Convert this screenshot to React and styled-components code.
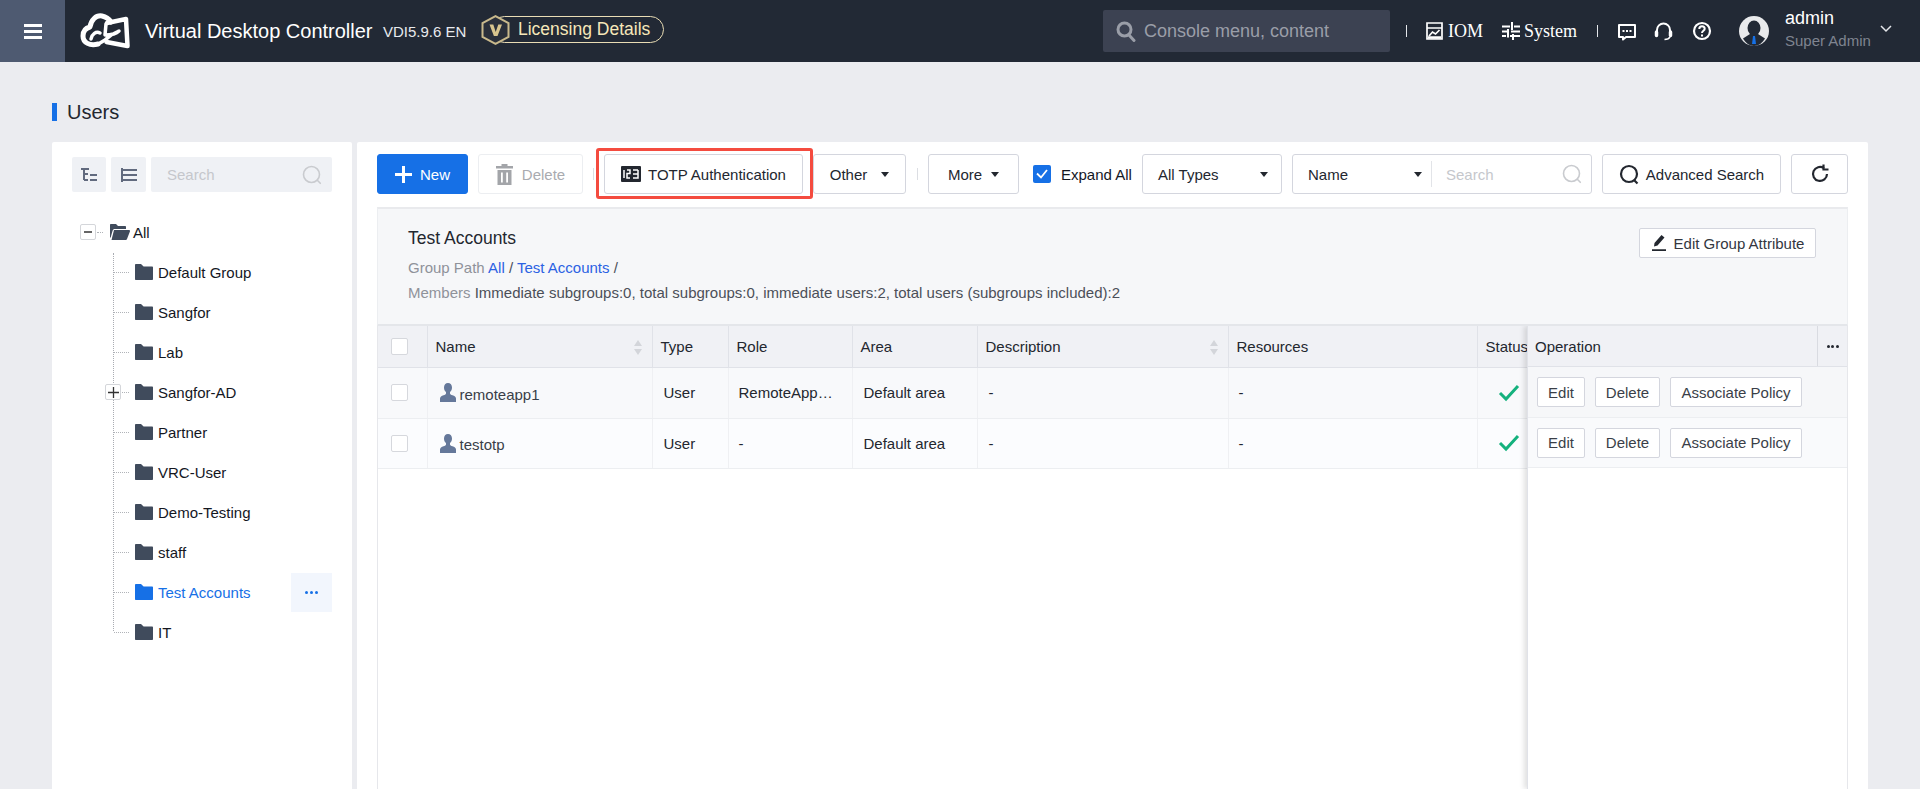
import React from "react";
import styled, { createGlobalStyle } from "styled-components";

const Global = createGlobalStyle`
  html, body { margin: 0; padding: 0; height: 789px; overflow: hidden; background: #ebecf0; }
  body { font-family: "Liberation Sans", Arial, sans-serif; font-size: 15px; color: #1f2430; }
  * { box-sizing: border-box; }
`;

const Page = styled.div`height: 789px; display: flex; flex-direction: column; overflow: hidden;`;

const Header = styled.header`
  height: 62px; flex: none; background: #222935; display: flex; align-items: center; color: #fff;
`;
const MenuBlock = styled.div`
  width: 65px; height: 62px; background: #4e5a71; display: flex; flex-direction: column;
  align-items: center; justify-content: center; gap: 3px; flex: none;
  i { display: block; width: 18px; height: 3px; background: #fff; }
`;
const Logo = styled.svg`width: 50px; height: 38px; margin-left: 15px; flex: none;`;
const AppTitle = styled.div`font-size: 20px; margin-left: 15px; white-space: nowrap; flex: none; width: 228px;`;
const Version = styled.div`font-size: 15px; margin-left: 10px; white-space: nowrap; color: #e8eaee; flex: none; width: 84px;`;
const License = styled.div`
  position: relative; margin-left: 24px; height: 27px; width: 173px; flex: none;
  border: 1px solid #e9dcb4; border-radius: 14px; color: #f6e7b9; font-size: 17.5px;
  display: flex; align-items: center; padding-left: 26px; white-space: nowrap; margin-top: -3px;
`;
const Hex = styled.svg`position: absolute; left: -11px; top: -2px; width: 29px; height: 30px;`;
const TopSearch = styled.div`
  width: 287px; height: 42px; background: #3c4252; border-radius: 2px; display: flex; align-items: center; flex: none;
  margin-left: 439px; padding-left: 13px; gap: 8px; color: #9a9ea8; font-size: 18px; white-space: nowrap;
`;
const TopSep = styled.span`width: 1px; height: 12px; background: #e4e6ea; flex: none; margin-left: ${p => p.$l}px;`;
const SerifLink = styled.div`
  font-family: "Liberation Serif", serif; font-size: 18px; display: flex; align-items: center; gap: ${p => p.$g}px;
  margin-left: 19px; width: ${p => p.$w}px; flex: none; color: #fff; white-space: nowrap;
`;
const TopIcon = styled.svg`width: ${p => p.$w || 20}px; height: 20px; flex: none; margin-left: ${p => p.$l || 0}px; display: block;`;
const Avatar = styled.svg`width: 30px; height: 30px; margin-left: 27px; flex: none;`;
const UserBox = styled.div`
  margin-left: 16px; width: 95px; height: 62px; flex: none; display: flex; flex-direction: column; padding-top: 8px; white-space: nowrap;
`;
const UserName = styled.div`font-size: 18px; line-height: 20px; color: #fff;`;
const UserRole = styled.div`font-size: 15px; line-height: 20px; margin-top: 3px; color: #7f8490;`;
const Chevron = styled.svg`width: 12px; height: 8px; flex: none; margin-top: -4px;`;

const Content = styled.main`flex: 1; padding: 0 52px; display: flex; flex-direction: column; min-height: 0;`;
const PageTitle = styled.h1`
  margin: 41px 0 21px; height: 18px; font-weight: 400; font-size: 20px; line-height: 18px; padding-left: 10px;
  border-left: 5px solid #1670e6; color: #23272f;
`;
const Panels = styled.div`flex: 1; display: flex; gap: 5px; min-height: 0;`;

const TreePanel = styled.aside`
  width: 300px; flex: none; background: #fff; border-radius: 2px 2px 0 0; padding: 15px 20px 0;
`;
const TreeTools = styled.div`display: flex; gap: 5px;`;
const ToolBtn = styled.div`
  width: ${p => p.$w}px; height: 35px; background: #eff1f5; border-radius: 2px; display: flex; align-items: center; justify-content: center; flex: none;
`;
const TreeSearch = styled.div`
  flex: 1; height: 35px; background: #eff1f5; border-radius: 2px; display: flex; align-items: center; justify-content: space-between;
  padding: 0 10px 0 16px; color: #c5c7cc; font-size: 15px;
`;
const Tree = styled.div`position: relative; margin-top: 20px;`;
const RootRow = styled.div`
  height: 40px; display: flex; align-items: center; padding-left: 8px; position: relative; color: #14171f;
`;
const Expander = styled.span`
  width: 16px; height: 16px; border: 1px solid #d4d6da; border-radius: 2px; display: flex; align-items: center; justify-content: center;
  background: #fff; flex: none; position: relative; z-index: 1;
`;
const Dots = styled.span`display: block; width: ${p => p.$w}px; margin-left: ${p => p.$l || 0}px; border-top: 1px dotted #b0b3b8; flex: none;`;
const OpenFolder = styled.svg`width: 20px; height: 16px; margin: 0 3px 0 7px; flex: none;`;
const VLine = styled.span`
  position: absolute; left: 41px; top: 41px; height: 378px; border-left: 1px dotted #a9acb2;
`;
const Node = styled.div`
  height: 40px; display: flex; align-items: center; position: relative; padding-left: 42px;
  color: ${p => (p.$active ? "#1670e6" : "#14171f")};
`;
const NodeExp = styled(Expander)`position: absolute; left: 33px; top: 12px;`;
const FolderIcon = styled.svg`width: 18px; height: 16px; flex: none; margin: 0 5px 0 6px;`;
const NodeMore = styled.div`
  margin-left: auto; width: 41px; height: 39px; background: #f2f6fd; display: flex; align-items: center; justify-content: center;
  gap: 2px; i { width: 3px; height: 3px; border-radius: 50%; background: #1670e6; display: block; }
`;

const MainPanel = styled.section`flex: 1; background: #fff; padding: 12px 20px 0 20px; border-radius: 2px 2px 0 0; display: flex; flex-direction: column; min-width: 0;`;
const Toolbar = styled.div`display: flex; align-items: center; height: 40px; flex: none; font-size: 15px;`;
const Btn = styled.button`
  height: 40px; width: ${p => p.$w}px; margin-left: ${p => p.$l || 0}px; flex: none; font: inherit; font-size: 15px; padding: 0;
  background: ${p => (p.$primary ? "#1670e6" : "#fff")};
  color: ${p => (p.$primary ? "#fff" : p.$muted ? "#a9abb0" : "#23272f")};
  border: 1px solid ${p => (p.$primary ? "#1670e6" : p.$muted ? "#eceef1" : "#d4d6de")};
  border-radius: 3px; display: flex; align-items: center; justify-content: center; gap: ${p => p.$gap ?? 6}px; white-space: nowrap;
`;
const Highlight = styled.div`
  position: relative; margin-left: 10px; flex: none;
  &::after { content: ""; position: absolute; inset: -6px -10px -5px -8px; border: 3px solid #f44b3f; border-radius: 3px; pointer-events: none; }
`;
const ToolSep = styled.span`width: 1px; height: 12px; background: #dcdee3; flex: none; margin-left: ${p => p.$l}px;`;
const Caret = styled.span`
  width: 0; height: 0; border-left: 4.5px solid transparent; border-right: 4.5px solid transparent; border-top: 5px solid #23272f; flex: none;
`;
const CheckLabel = styled.label`display: flex; align-items: center; gap: 10px; margin-left: 14px; width: 99px; white-space: nowrap; flex: none; color: #14171f;`;
const CheckBlue = styled.span`
  width: 18px; height: 18px; background: #1670e6; border-radius: 2px; display: flex; align-items: center; justify-content: center; flex: none;
`;
const Select = styled.div`
  height: 40px; width: 140px; margin-left: 10px; border: 1px solid #d4d6de; border-radius: 3px; flex: none;
  display: flex; align-items: center; justify-content: space-between; padding: 0 13px 0 15px; color: #23272f;
`;
const NameSearch = styled.div`
  height: 40px; width: 300px; margin-left: 10px; border: 1px solid #d4d6de; border-radius: 3px; flex: none; display: flex; align-items: center;
`;
const NameSel = styled.div`
  width: 139px; height: 26px; border-right: 1px solid #e2e4e8; display: flex; align-items: center; justify-content: space-between; padding: 0 9px 0 15px; color: #23272f;
`;
const NameInput = styled.div`
  flex: 1; display: flex; align-items: center; justify-content: space-between; padding: 0 9px 0 14px; color: #c5c7cc;
`;

const InfoPanel = styled.div`
  margin-top: 13px; height: 119px; flex: none; background: #f6f7f9; border-top: 2px solid #e9eaed; padding: 19px 31px 0 30px; position: relative;
  border-left: 1px solid #eceef1; border-right: 1px solid #eceef1; border-bottom: 2px solid #e4e6ea;
  display: flex; justify-content: space-between;
`;
const InfoText = styled.div`display: flex; flex-direction: column;`;
const InfoTitle = styled.div`font-size: 17.5px; line-height: 20px; color: #23272f;`;
const InfoLine = styled.div`font-size: 15px; line-height: 20px; margin-top: ${p => p.$t}px; color: #4b4f58;`;
const Muted = styled.span`color: #8f929a;`;
const PathLink = styled.span`color: #2b62e3;`;
const EditAttr = styled.button`
  width: 177px; height: 30px; font: inherit; font-size: 15px; color: #33373f; background: #fff; border: 1px solid #d4d6de; border-radius: 2px;
  display: flex; align-items: center; justify-content: center; gap: 7px; padding: 0; flex: none; white-space: nowrap;
`;

const TableArea = styled.div`
  flex: 1; position: relative; border-left: 1px solid #e6e7eb; border-right: 1px solid #e6e7eb; min-height: 0; overflow: hidden;
`;
const Table = styled.table`border-collapse: collapse; table-layout: fixed; width: 1470px;`;
const Th = styled.th`
  width: ${p => p.$w}px; height: 41px; background: #f0f1f5; border-right: 1px solid #e0e2e8; border-bottom: 1px solid #e0e2e8; font-weight: 400;
  text-align: left; padding: 0 0 0 ${p => p.$p ?? 8}px; position: relative; color: #23272f; font-size: 15px; white-space: nowrap; overflow: hidden;
`;
const Td = styled.td`
  height: ${p => p.$h}px; border-right: 1px solid #eff0f3; border-bottom: 1px solid #eceef1; padding: 0 0 0 ${p => p.$p ?? 11}px; font-size: 15px; color: #23272f;
  background: ${p => p.$bg}; white-space: nowrap; overflow: hidden;
`;
const Box = styled.span`
  display: block; width: 17px; height: 17px; border: 1px solid #d6d8dd; background: #fff; border-radius: 2px; margin-left: 13px;
`;
const SortMark = styled.span`
  position: absolute; right: 10px; top: 14px; display: flex; flex-direction: column; gap: 3px;
  i { display: block; width: 0; height: 0; border-left: 4px solid transparent; border-right: 4px solid transparent; }
  i:first-child { border-bottom: 6px solid #d3d5da; }
  i:last-child { border-top: 6px solid #d3d5da; }
`;
const UserCell = styled.div`display: flex; align-items: center; gap: 4px; color: #3a3f48;`;
const UserText = styled.span`padding-top: 3px;`;
const OpColumn = styled.div`
  position: absolute; right: 0; top: 0; bottom: 0; width: 320px; background: #fff; box-shadow: -3px 0 5px rgba(0,0,0,.12); border-left: 1px solid #e0e2e8;
`;
const OpHead = styled.div`
  height: 41px; background: #f0f1f5; display: flex; align-items: center; justify-content: space-between; border-bottom: 1px solid #e0e2e8; padding-left: 7px; color: #23272f;
`;
const OpMore = styled.div`
  width: 30px; height: 40px; border-left: 1px solid #d9dbe1; display: flex; align-items: center; justify-content: center; gap: 1.5px;
  i { width: 3px; height: 3px; border-radius: 50%; background: #23272f; display: block; }
`;
const OpRow = styled.div`
  height: ${p => p.$h}px; background: ${p => p.$bg}; border-bottom: 1px solid #eceef1; display: flex; align-items: center; padding-left: 9px; gap: 10px;
`;
const OpBtn = styled.button`
  height: 30px; width: ${p => p.$w}px; padding: 0; flex: none; font: inherit; font-size: 15px; color: #3a3f48; background: #fff; border: 1px solid #d4d6de; border-radius: 2px; white-space: nowrap;
`;

const Search = ({ size = 20, color = "#c9cbcf", width = 1.6 }) => (
  <svg width={size} height={size} viewBox="0 0 20 20" fill="none" stroke={color} strokeWidth={width}>
    <circle cx="9.5" cy="9.5" r="8" />
    <path d="M15.3 15.3l3 3" strokeLinecap="round" />
  </svg>
);
const Folder = ({ color = "#404b5c" }) => (
  <FolderIcon viewBox="0 0 18 16"><path fill={color} d="M0 1.200C0 .5.4 0 1 0h5l2.600 2.400H17c.6 0 1 .4 1 1V15c0 .6-.4 1-1 1H1c-.6 0-1-.4-1-1z" /></FolderIcon>
);
const Person = () => (
  <svg width="16" height="19" viewBox="0 0 16 19"><path fill="#65789a" d="M8 0c2.500 0 4 1.900 4 4.400 0 2-.8 3.600-2 4.600v1.400c0 .8 1 1.200 2.500 1.800C14.500 13 16 13.800 16 15.500V19H0v-3.500C0 13.800 1.500 13 3.500 12.200 5 11.600 6 11.200 6 10.400V9C4.800 8 4 6.400 4 4.400 4 1.900 5.500 0 8 0z" /></svg>
);
const GreenCheck = () => (
  <svg width="22" height="18" viewBox="0 0 22 18" fill="none" stroke="#14b17d" strokeWidth="3" style={{ display: "block" }}><path d="M2 9l6 6L20 2" /></svg>
);

const groups = ["Default Group", "Sangfor", "Lab", "Sangfor-AD", "Partner", "VRC-User", "Demo-Testing", "staff", "Test Accounts", "IT"];

export default function App() {
  return (
    <Page>
      <Global />
      <Header>
        <MenuBlock><i /><i /><i /></MenuBlock>
        <Logo viewBox="0 0 50 38" fill="none" stroke="#fff" strokeLinecap="round" strokeLinejoin="round">
          <path strokeWidth="5" d="M18 32C10 34 3 31 3 24c0-5 3-8 7-9C11 8 16 3 22 4c4 .8 7 3 9 6" />
          <path strokeWidth="4.500" d="M27 11l19-4 1.500 27-21-4" />
          <path strokeWidth="3.500" d="M11 27c1-5 5-8 9-6" />
          <path strokeWidth="3.500" d="M26 12l-1 11c5 0 11-1 14-4-5 2-10 5-14 9l-5 3" />
        </Logo>
        <AppTitle>Virtual Desktop Controller</AppTitle>
        <Version>VDI5.9.6 EN</Version>
        <License>
          <Hex viewBox="0 0 29 30">
            <path fill="#2a2f3a" stroke="#c9b98c" strokeWidth="2" d="M14.500 1.200L27.500 8v14l-13 6.800L1.500 22V8z" />
            <path fill="#d8c48e" d="M8.500 9.500h3.800l2.400 7.500 2.600-7.500h3.700L16.500 21h-3.600z" />
          </Hex>
          Licensing Details
        </License>
        <TopSearch>
          <svg width="20" height="21" viewBox="0 0 20 21" fill="none" stroke="#9a9ea8" strokeWidth="3"><circle cx="8.500" cy="8.500" r="6.500" /><path d="M13 14l5 5.500" strokeLinecap="round" /></svg>
          Console menu, content
        </TopSearch>
        <TopSep $l={16} />
        <SerifLink $g={5} $w={57}>
          <TopIcon $w={17} viewBox="0 0 17 20" fill="none" stroke="#fff" strokeWidth="1.700">
            <path d="M1 2h15v16H1zM1 7h15" />
            <path d="M3 15l3.500-4 3 2 4-4" />
            <path d="M2 16.500h13" strokeWidth="2.500" />
          </TopIcon>
          IOM
        </SerifLink>
        <SerifLink $g={4} $w={75}>
          <TopIcon $w={18} viewBox="0 0 18 20" fill="none" stroke="#fff" strokeWidth="2">
            <path d="M0 5.500h8M12 5.500h6M0 10.500h5M9 10.500h9M0 15h4M8 15h10M10 1v8M6 8v8.500M11 13v6" />
          </TopIcon>
          System
        </SerifLink>
        <TopSep $l={20} />
        <TopIcon $w={18} $l={20} viewBox="0 0 18 20" fill="none">
          <path stroke="#fff" strokeWidth="2" strokeLinejoin="round" d="M1 4h16v12H8l-3 2.500V16H1z" />
          <path fill="#fff" d="M4.500 9h2v2h-2zM8 9h2v2H8zM11.500 9h2v2h-2z" />
        </TopIcon>
        <TopIcon $w={19} $l={18} viewBox="0 0 19 20" fill="none" stroke="#fff">
          <path strokeWidth="2" d="M3 11V9a6.500 6.500 0 0 1 13 0v2" />
          <path strokeWidth="3.500" strokeLinecap="round" d="M2.500 11v3.500M16.500 11v3.500" />
          <path strokeWidth="1.600" d="M16 16c-1 2-3 2.500-5.500 2.500" />
        </TopIcon>
        <TopIcon $w={20} $l={19} viewBox="0 0 20 20" fill="none" stroke="#fff" strokeWidth="2.200">
          <circle cx="10" cy="10" r="8" />
          <path d="M7.300 8c0-1.700 1.200-2.700 2.700-2.700s2.700 1 2.700 2.500c0 2-2.700 2-2.700 4.200" strokeWidth="2" />
          <path d="M10 13.500v2" strokeWidth="2" />
        </TopIcon>
        <Avatar viewBox="0 0 30 30">
          <circle cx="15" cy="15" r="15" fill="#e9eaec" />
          <ellipse cx="15" cy="12" rx="6.500" ry="7.500" fill="#222935" />
          <path fill="#222935" d="M11 18h8l7 4.500C23.500 27 19.500 30 15 30S6.500 27 4 22.500z" />
          <path fill="#1670e6" d="M14 20h2l1 8h-4z" />
        </Avatar>
        <UserBox>
          <UserName>admin</UserName>
          <UserRole>Super Admin</UserRole>
        </UserBox>
        <Chevron viewBox="0 0 12 8" fill="none" stroke="#e4e6ea" strokeWidth="1.500"><path d="M1 1l5 5 5-5" /></Chevron>
      </Header>
      <Content>
        <PageTitle>Users</PageTitle>
        <Panels>
          <TreePanel>
            <TreeTools>
              <ToolBtn $w={34}>
                <svg width="16" height="14" viewBox="0 0 16 14" fill="none" stroke="#616a7e" strokeWidth="2"><path d="M0 1h8M3 1v11M3 6h4M3 12h4M9 7h7M9 12h7" /></svg>
              </ToolBtn>
              <ToolBtn $w={35}>
                <svg width="16" height="14" viewBox="0 0 16 14" fill="none" stroke="#616a7e" strokeWidth="2"><path d="M1 0v14M1 2h15M1 7h15M1 12h15" /></svg>
              </ToolBtn>
              <TreeSearch>Search<Search /></TreeSearch>
            </TreeTools>
            <Tree>
              <RootRow>
                <Expander><svg width="10" height="10" viewBox="0 0 10 10"><path stroke="#333" strokeWidth="1.500" d="M1 5h8" /></svg></Expander>
                <Dots $w={6} $l={1} />
                <OpenFolder viewBox="0 0 20 16">
                  <path fill="#404b5c" d="M0 1c0-.6.4-1 1-1h5l2 2h7c.6 0 1 .4 1 1v2H5C3.500 5 3 5.500 2.500 7L.8 13 0 14z" />
                  <path fill="#404b5c" d="M4 6h15c.8 0 1.200.6 1 1.200L17 15c-.2.6-.6 1-1.200 1H1.500z" />
                </OpenFolder>
                All
              </RootRow>
              <VLine />
              {groups.map((g) => (
                <Node key={g} $active={g === "Test Accounts"}>
                  {g === "Sangfor-AD" && <NodeExp><svg width="11" height="11" viewBox="0 0 11 11"><path stroke="#333" strokeWidth="1.300" d="M0 5.500h11M5.500 0v11" /></svg></NodeExp>}
                  <Dots $w={15} />
                  <Folder color={g === "Test Accounts" ? "#1670e6" : "#404b5c"} />
                  {g}
                  {g === "Test Accounts" && <NodeMore><i /><i /><i /></NodeMore>}
                </Node>
              ))}
            </Tree>
          </TreePanel>
          <MainPanel>
            <Toolbar>
              <Btn $primary $w={91} $gap={8}>
                <svg width="17" height="17" viewBox="0 0 17 17" fill="none" stroke="#fff" strokeWidth="3"><path d="M0 8.500h17M8.500 0v17" /></svg>
                New
              </Btn>
              <Btn $muted $w={105} $l={10} $gap={9}>
                <svg width="17" height="21" viewBox="0 0 17 21"><path fill="#a3a5a9" fillRule="evenodd" d="M5.500 0h6v2H17v2.500H0V2h5.500zM1.500 6h14v15h-14zM5 8.500v10h1.800v-10zM10.200 8.500v10H12v-10z" /></svg>
                Delete
              </Btn>
              <ToolSep $l={10} />
              <Highlight>
                <Btn $w={199} $gap={7}>
                  <svg width="20" height="16" viewBox="0 0 20 16">
                    <rect width="20" height="16" rx="1" fill="#23272f" />
                    <path fill="none" stroke="#fff" strokeWidth="1.500" d="M3 4v8M6 4h3v3.500H6V12h3M12 4h5M12 8h5M17 4v8h-5" />
                  </svg>
                  TOTP Authentication
                </Btn>
              </Highlight>
              <Btn $w={93} $l={10} $gap={14}>Other<Caret /></Btn>
              <ToolSep $l={11} />
              <Btn $w={91} $l={10} $gap={9}>More<Caret /></Btn>
              <CheckLabel>
                <CheckBlue>
                  <svg width="12" height="10" viewBox="0 0 12 10" fill="none" stroke="#fff" strokeWidth="1.800"><path d="M1 4.500l4 4 6-7.500" /></svg>
                </CheckBlue>
                Expand All
              </CheckLabel>
              <Select>All Types<Caret /></Select>
              <NameSearch>
                <NameSel>Name<Caret /></NameSel>
                <NameInput>Search<Search /></NameInput>
              </NameSearch>
              <Btn $w={179} $l={10} $gap={6}>
                <svg width="21" height="21" viewBox="0 0 21 21" fill="none" stroke="#23272f" strokeWidth="2.200"><circle cx="10" cy="10" r="8" /><path d="M15 16l3.500 3.500" /></svg>
                Advanced Search
              </Btn>
              <Btn $w={57} $l={10}>
                <svg width="20" height="20" viewBox="0 0 20 20" fill="none" stroke="#23272f" strokeWidth="2.200"><path d="M17 10a7 7 0 1 1-3-5.800" /><path d="M13.500 0.500v5h5" /></svg>
              </Btn>
            </Toolbar>
            <InfoPanel>
              <InfoText>
                <InfoTitle>Test Accounts</InfoTitle>
                <InfoLine $t={10}><Muted>Group Path</Muted> <PathLink>All</PathLink> / <PathLink>Test Accounts</PathLink> /</InfoLine>
                <InfoLine $t={5}><Muted>Members</Muted> Immediate subgroups:0, total subgroups:0, immediate users:2, total users (subgroups included):2</InfoLine>
              </InfoText>
              <EditAttr>
                <svg width="16" height="16" viewBox="0 0 16 16"><path fill="#23272f" d="M10.500 0l3 2.500-7 8-3.500 1 .5-3.500zM1 14.300h14V16H1z" /></svg>
                Edit Group Attribute
              </EditAttr>
            </InfoPanel>
            <TableArea>
              <Table>
                <thead>
                  <tr>
                    <Th $w={49} $p={0}><Box /></Th>
                    <Th $w={225}>Name<SortMark><i /><i /></SortMark></Th>
                    <Th $w={76}>Type</Th>
                    <Th $w={124}>Role</Th>
                    <Th $w={125}>Area</Th>
                    <Th $w={251}>Description<SortMark><i /><i /></SortMark></Th>
                    <Th $w={249}>Resources</Th>
                    <Th $w={371}>Status</Th>
                  </tr>
                </thead>
                <tbody>
                  {[["remoteapp1", "RemoteApp…", 51, "#f8f9fb"], ["testotp", "-", 50, "#fbfcfe"]].map(([name, role, h, bg]) => (
                    <tr key={name}>
                      <Td $h={h} $bg={bg} $p={0}><Box /></Td>
                      <Td $h={h} $bg={bg} $p={12}><UserCell><Person /><UserText>{name}</UserText></UserCell></Td>
                      <Td $h={h} $bg={bg}>User</Td>
                      <Td $h={h} $bg={bg} $p={10}>{role}</Td>
                      <Td $h={h} $bg={bg}>Default area</Td>
                      <Td $h={h} $bg={bg}>-</Td>
                      <Td $h={h} $bg={bg} $p={10}>-</Td>
                      <Td $h={h} $bg={bg} $p={20}><GreenCheck /></Td>
                    </tr>
                  ))}
                </tbody>
              </Table>
              <OpColumn>
                <OpHead>Operation<OpMore><i /><i /><i /></OpMore></OpHead>
                {[[51, "#f6f7f9"], [50, "#f9fafc"]].map(([h, bg]) => (
                  <OpRow key={h} $h={h} $bg={bg}>
                    <OpBtn $w={48}>Edit</OpBtn>
                    <OpBtn $w={65}>Delete</OpBtn>
                    <OpBtn $w={132}>Associate Policy</OpBtn>
                  </OpRow>
                ))}
              </OpColumn>
            </TableArea>
          </MainPanel>
        </Panels>
      </Content>
    </Page>
  );
}
